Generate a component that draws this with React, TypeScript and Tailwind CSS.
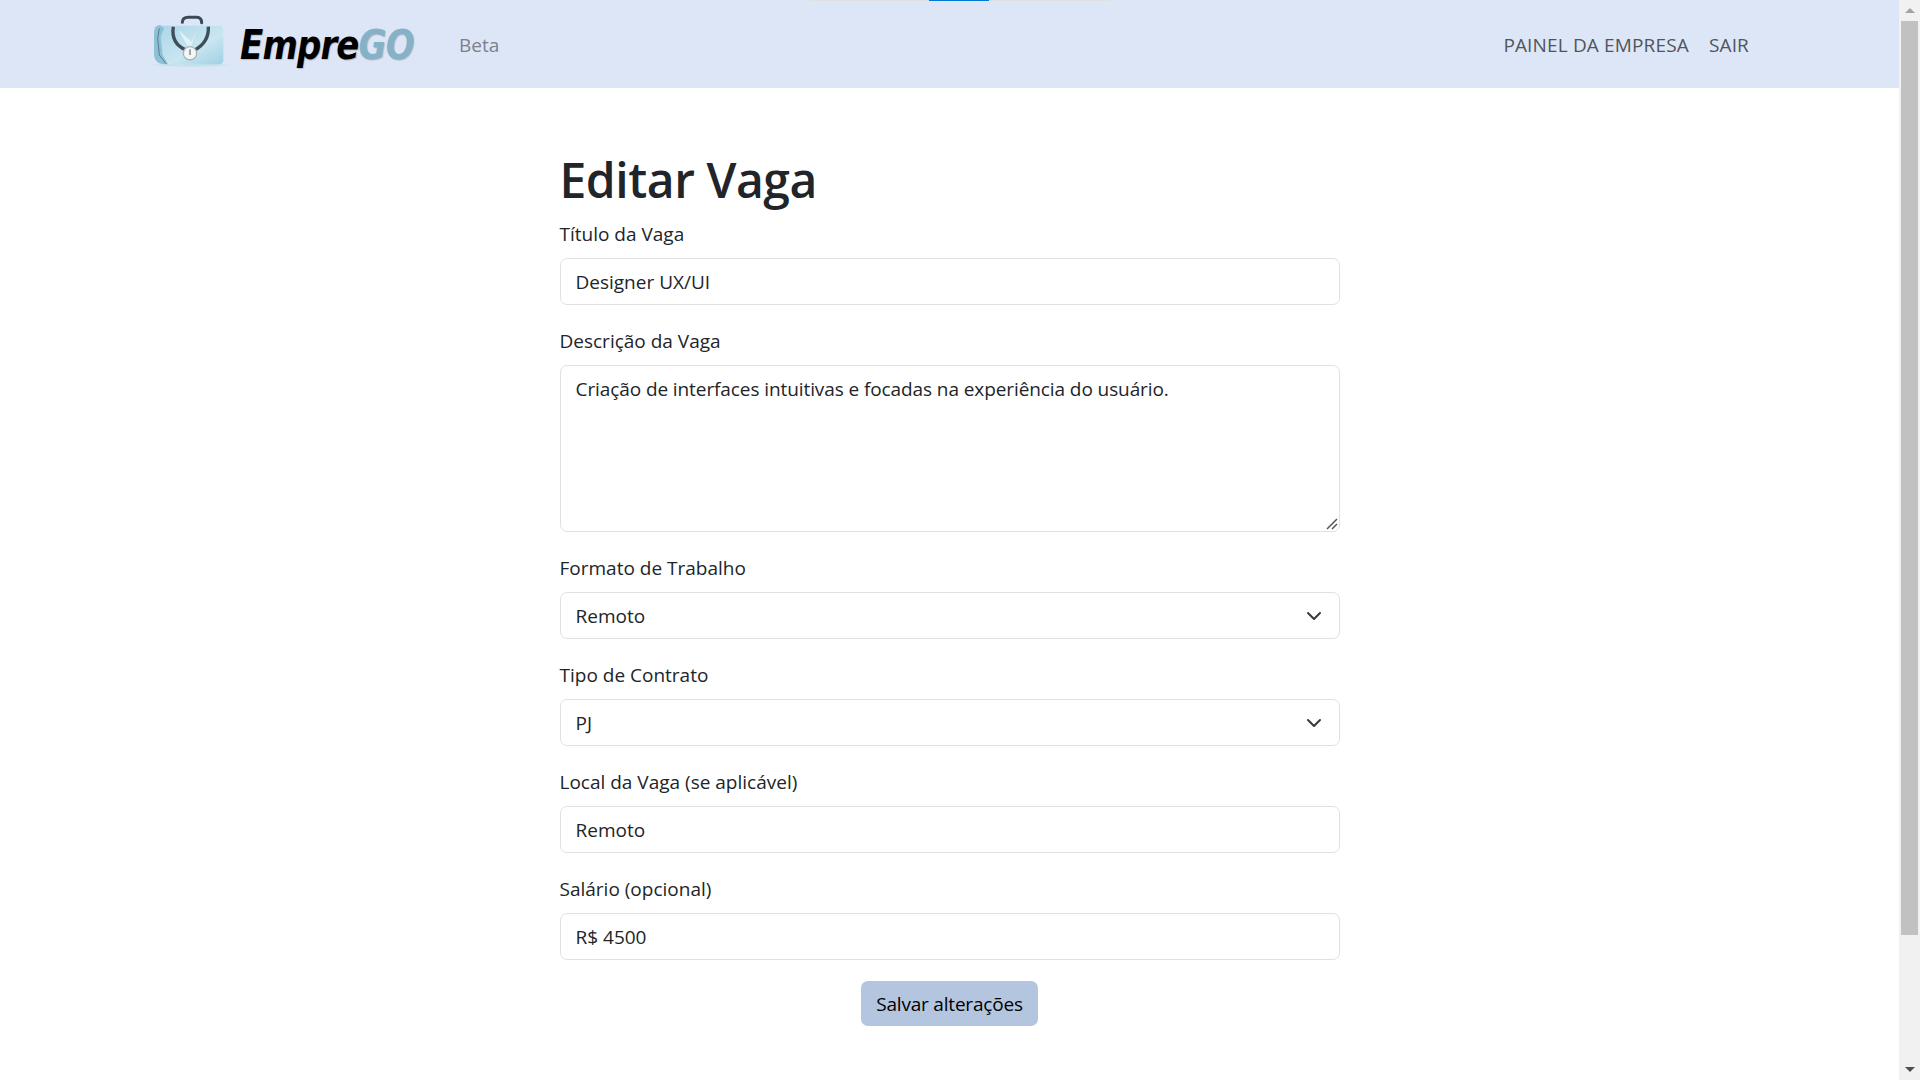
import { ChevronDown } from "lucide-react";

const font = "font-['Open_Sans','Noto_Sans',sans-serif]";

function Logo() {
  return (
    <div className="flex items-center w-[315px] h-[70px] -mt-[8px]">
      <svg width="100" height="70" viewBox="0 0 300 210" className="shrink-0">
        <defs>
          <linearGradient id="bag" x1="0" y1="0" x2="1" y2="1">
            <stop offset="0" stopColor="#a9d5e8" />
            <stop offset="0.6" stopColor="#c9e6f1" />
            <stop offset="1" stopColor="#9fd0e4" />
          </linearGradient>
        </defs>
        <path d="M20 180 Q150 172 282 180 Q150 190 20 180z" fill="#c3e2ee" />
        <path d="M55 62 H238 Q250 62 250 75 V165 Q250 178 236 178 H75 Q45 178 42 150 V75 Q42 62 55 62z" fill="url(#bag)" />
        <path d="M42 90 Q42 62 60 60 L72 70 L62 95 L68 150 L84 178 H72 Q45 176 42 150z" fill="#8dc1d8" />
        <path d="M115 75 L150 135 L170 75 L155 110z" fill="#e3f1f7" />
        <path d="M58 70 L53 100 L58 150 L78 176" fill="none" stroke="#5d7a8a" strokeWidth="3" />
        <path d="M127 52 Q127 37 145 37 H170 Q185 38 185 53" fill="none" stroke="#3c4a55" strokeWidth="9" strokeLinecap="round" />
        <path d="M100 65 Q92 115 138 135" fill="none" stroke="#3f4e59" strokeWidth="10" />
        <path d="M205 65 Q208 110 165 135" fill="none" stroke="#3f4e59" strokeWidth="10" />
        <circle cx="150" cy="145" r="20" fill="#f3f5f6" stroke="#aab3b8" strokeWidth="4" />
        <path d="M150 133 V150" stroke="#4a5660" strokeWidth="3" />
      </svg>
      <span className="mt-[10px] text-[40px] leading-none font-bold italic tracking-[-1px] font-['DejaVu_Sans',sans-serif] text-black scale-x-[0.85] origin-left [text-shadow:1px_1px_1px_#b5b9c0]">
        Empre<span className="text-[#85b2c8]">GO</span>
      </span>
    </div>
  );
}

function Field({ label, children }: { label: string; children: React.ReactNode }) {
  return (
    <div className="mb-[22px]">
      <label className="block mb-[9px] text-[19px] leading-[29px] text-[#212529]">{label}</label>
      {children}
    </div>
  );
}

const inputClass =
  "flex items-center w-full h-[47px] px-[15px] pt-px bg-white border border-[#dee2e6] rounded-[7px] text-[19px] text-[#212529]";

function Select({ value }: { value: string }) {
  return (
    <div className={`${inputClass} justify-between`}>
      <span>{value}</span>
      <ChevronDown size={24} strokeWidth={2} className="text-[#343a40] -mr-[2px] -mt-px" />
    </div>
  );
}

export default function App() {
  return (
    <div className={`h-screen flex overflow-hidden bg-white ${font}`}>
      <div className="flex-1 relative flex flex-col">
        {/* loading bar */}
        <div className="absolute top-0 left-[810px] w-[300px] h-px bg-[#e0e0e0]">
          <div className="ml-[119px] w-[60px] h-px bg-[#0078d7]" />
        </div>

        <nav className="h-[88px] bg-[#dde6f7] flex items-center pl-[140px] pr-[150px]">
          <Logo />
          <span className="ml-[4px] pt-[2px] text-[19px] text-[#7c818b]">Beta</span>
          <div className="ml-auto pt-[2px] flex gap-[20px] text-[19px] tracking-[0.15px] text-[#50555c]">
            <span>PAINEL DA EMPRESA</span>
            <span>SAIR</span>
          </div>
        </nav>

        <main className="w-[780px] mx-auto pt-[63px]">
          <h1 className="text-[48px] leading-[58px] font-semibold tracking-[-0.45px] text-[#212529] mb-[11px]">Editar Vaga</h1>
          <Field label="Título da Vaga">
            <div className={inputClass}>Designer UX/UI</div>
          </Field>
          <Field label="Descrição da Vaga">
            <div className="relative w-full h-[167px] px-[15px] py-[9px] bg-white border border-[#dee2e6] rounded-[7px] text-[19px] tracking-[-0.09px] text-[#212529]">
              Criação de interfaces intuitivas e focadas na experiência do usuário.
              <svg width="12" height="12" viewBox="0 0 12 12" className="absolute right-[1px] bottom-[1px]">
                <path d="M1 11 L11 1 M6 11 L11 6" stroke="#555" strokeWidth="1.5" />
              </svg>
            </div>
          </Field>
          <Field label="Formato de Trabalho">
            <Select value="Remoto" />
          </Field>
          <Field label="Tipo de Contrato">
            <Select value="PJ" />
          </Field>
          <Field label="Local da Vaga (se aplicável)">
            <div className={inputClass}>Remoto</div>
          </Field>
          <Field label="Salário (opcional)">
            <div className={inputClass}>R$ 4500</div>
          </Field>
          <div className="flex justify-center -mt-px">
            <button className="w-[177px] h-[45px] pt-px bg-[#b4c5e0] rounded-[7px] text-[19px] tracking-[-0.2px] text-black">Salvar alterações</button>
          </div>
        </main>
      </div>

      {/* scrollbar */}
      <div className="w-[21px] h-full bg-[#f1f1f1] flex flex-col items-center">
        <div className="h-[21px] flex items-center justify-center">
          <div className="w-0 h-0 border-x-[5px] border-x-transparent border-b-[5px] border-b-[#a3a3a3]" />
        </div>
        <div className="w-[17px] h-[914px] bg-[#c1c1c1]" />
        <div className="mt-auto h-[21px] flex items-center justify-center">
          <div className="w-0 h-0 border-x-[5px] border-x-transparent border-t-[5px] border-t-[#505050]" />
        </div>
      </div>
    </div>
  );
}
